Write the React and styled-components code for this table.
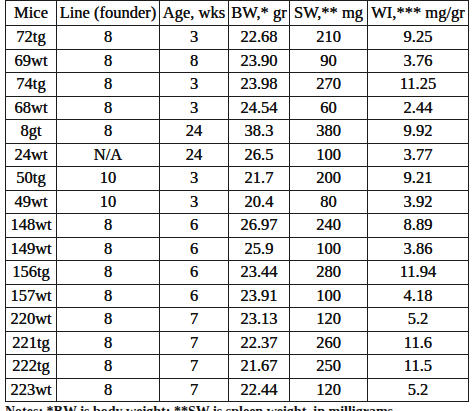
import React from "react";
import styled, { createGlobalStyle } from "styled-components";

const GlobalStyle = createGlobalStyle`
    html, body {
        margin: 0;
        padding: 0;
        background: #ffffff;
        overflow: hidden;
    }
`;

const columns = [51, 103, 69, 61, 78, 101];

const headers = [
    "Mice",
    "Line (founder)",
    "Age, wks",
    "BW,* gr",
    "SW,** mg",
    "WI,*** mg/gr",
];

const rows = [
    ["72tg", "8", "3", "22.68", "210", "9.25"],
    ["69wt", "8", "8", "23.90", "90", "3.76"],
    ["74tg", "8", "3", "23.98", "270", "11.25"],
    ["68wt", "8", "3", "24.54", "60", "2.44"],
    ["8gt", "8", "24", "38.3", "380", "9.92"],
    ["24wt", "N/A", "24", "26.5", "100", "3.77"],
    ["50tg", "10", "3", "21.7", "200", "9.21"],
    ["49wt", "10", "3", "20.4", "80", "3.92"],
    ["148wt", "8", "6", "26.97", "240", "8.89"],
    ["149wt", "8", "6", "25.9", "100", "3.86"],
    ["156tg", "8", "6", "23.44", "280", "11.94"],
    ["157wt", "8", "6", "23.91", "100", "4.18"],
    ["220wt", "8", "7", "23.13", "120", "5.2"],
    ["221tg", "8", "7", "22.37", "260", "11.6"],
    ["222tg", "8", "7", "21.67", "250", "11.5"],
    ["223wt", "8", "7", "22.44", "120", "5.2"],
];

const Page = styled.div`
    padding: 0 0 0 5px;
    font-family: "Liberation Serif", "Times New Roman", serif;
    color: #111111;
`;

const Table = styled.table`
    border-collapse: collapse;
    table-layout: fixed;
    width: 463px;
`;

const HeadCell = styled.th`
    height: 24px;
    padding: 0;
    border: 1px solid #1c1c1c;
    font-size: 16.5px;
    font-weight: normal;
    text-align: center;
    white-space: nowrap;
    vertical-align: middle;
    text-shadow: 0 0 0.4px #111;
`;

const Cell = styled.td`
    height: 22.5px;
    padding: 0;
    border: 1px solid #1c1c1c;
    font-size: 16.5px;
    text-align: center;
    white-space: nowrap;
    vertical-align: middle;
    text-shadow: 0 0 0.4px #111;
`;

const Note = styled.p`
    margin: 1px 0 0 0;
    font-size: 14px;
    font-weight: bold;
    white-space: nowrap;
    line-height: 18px;
`;

const App = () => {
    return (
        <>
            <GlobalStyle />
            <Page>
                <Table>
                    <colgroup>
                        {columns.map((w, i) => (
                            <col key={i} style={{ width: w }} />
                        ))}
                    </colgroup>
                    <thead>
                        <tr>
                            {headers.map((h) => (
                                <HeadCell key={h}>{h}</HeadCell>
                            ))}
                        </tr>
                    </thead>
                    <tbody>
                        {rows.map((row) => (
                            <tr key={row[0]}>
                                {row.map((value, i) => (
                                    <Cell key={i}>{value}</Cell>
                                ))}
                            </tr>
                        ))}
                    </tbody>
                </Table>
                <Note>
                    Notes: *BW is body weight; **SW is spleen weight, in milligrams
                </Note>
            </Page>
        </>
    );
};

export default App;
